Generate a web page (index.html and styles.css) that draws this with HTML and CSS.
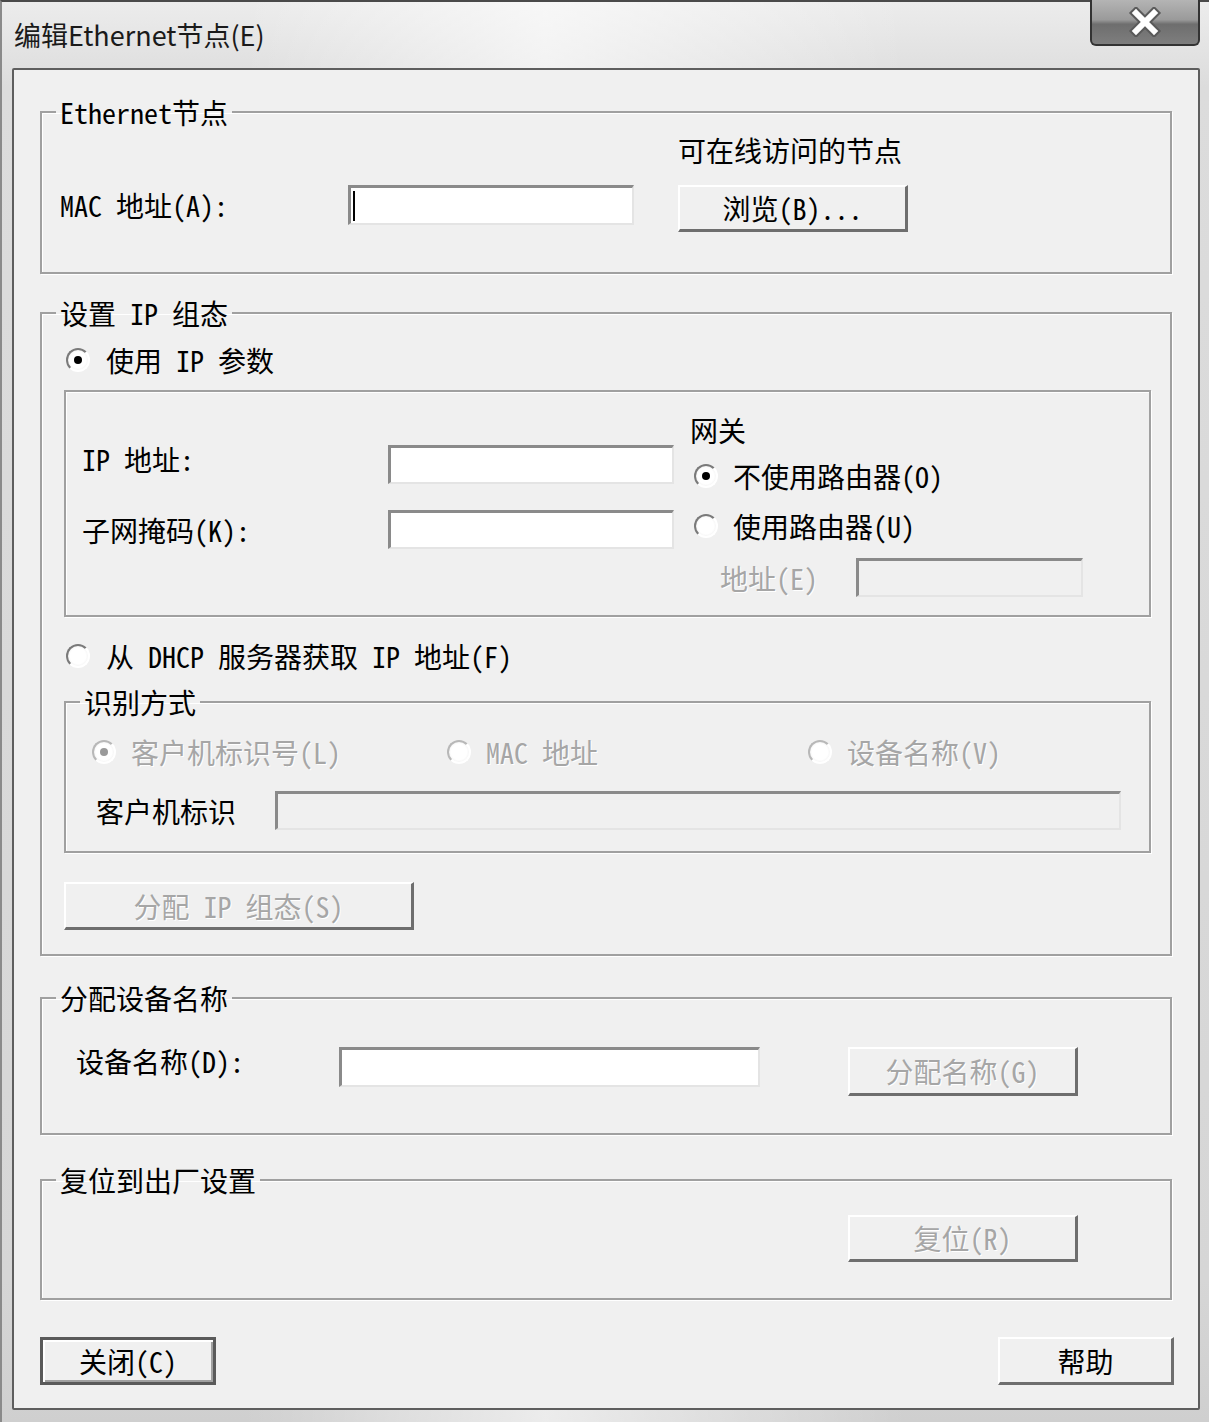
FILE: index.html
```html
<!DOCTYPE html>
<html>
<head>
    <meta charset="utf-8">
    <title>编辑Ethernet节点(E)</title>
    <link rel="stylesheet" href="styles.css">
</head>
<body>
<div class="window">
    <div class="titlebar">
        <span class="title">编辑Ethernet节点(E)</span>
        <div class="close-btn">
            <svg width="40" height="30" viewBox="0 0 40 30">
                <path d="M11 6 L29 24 M29 6 L11 24" stroke="#5a5a5a" stroke-width="10" stroke-linecap="square"/>
                <path d="M11 6 L29 24 M29 6 L11 24" stroke="#ffffff" stroke-width="6" stroke-linecap="square"/>
            </svg>
        </div>
    </div>

    <div class="client">
        <!-- Ethernet node -->
        <fieldset class="group">
            <legend>Ethernet节点</legend>
            <div class="eth-grid">
                <span></span>
                <span></span>
                <span class="caption">可在线访问的节点</span>
                <span class="mac-label">MAC 地址(A):</span>
                <div class="field mac-field"><span class="caret"></span></div>
                <button class="btn browse">浏览(B)...</button>
            </div>
        </fieldset>

        <!-- IP configuration -->
        <fieldset class="group ip-group">
            <legend>设置 IP 组态</legend>
            <div class="ip-body">
                <div class="option use-ip"><span class="radio on"></span>使用 IP 参数</div>

                <div class="ipbox">
                    <div class="ipleft">
                        <div class="row"><span class="row-label ip-label">IP 地址:</span><div class="field ip-field"></div></div>
                        <div class="row"><span class="row-label">子网掩码(K):</span><div class="field ip-field"></div></div>
                    </div>
                    <div class="ipright">
                        <span>网关</span>
                        <div class="option gw-first"><span class="radio on"></span>不使用路由器(O)</div>
                        <div class="option gw-second"><span class="radio"></span>使用路由器(U)</div>
                        <div class="row gw-addr"><span class="gw-label dis">地址(E)</span><div class="field off gw-field"></div></div>
                    </div>
                </div>

                <div class="option dhcp"><span class="radio"></span>从 DHCP 服务器获取 IP 地址(F)</div>

                <fieldset class="group id-group">
                    <legend>识别方式</legend>
                    <div class="id-body">
                        <div class="id-options">
                            <div class="option dis"><span class="radio on off"></span>客户机标识号(L)</div>
                            <div class="option dis"><span class="radio off"></span>MAC 地址</div>
                            <div class="option dis"><span class="radio off"></span>设备名称(V)</div>
                        </div>
                        <div class="row client-row"><span class="client-label">客户机标识</span><div class="field off client-field"></div></div>
                    </div>
                </fieldset>

                <button class="btn dis assign-ip">分配 IP 组态(S)</button>
            </div>
        </fieldset>

        <!-- Device name -->
        <fieldset class="group">
            <legend>分配设备名称</legend>
            <div class="name-body">
                <span class="name-label">设备名称(D):</span>
                <div class="field name-field"></div>
                <button class="btn dis assign-name">分配名称(G)</button>
            </div>
        </fieldset>

        <!-- Factory reset -->
        <fieldset class="group">
            <legend>复位到出厂设置</legend>
            <div class="reset-body">
                <button class="btn dis reset">复位(R)</button>
            </div>
        </fieldset>

        <div class="footer">
            <button class="btn default">关闭(C)</button>
            <button class="btn">帮助</button>
        </div>
    </div>
</div>
</body>
</html>
```

FILE: styles.css
```css
body {
    margin: 0;
    font-family: "Noto Sans Mono CJK SC", "Noto Sans CJK SC", monospace;
    font-size: 28px;
    line-height: 28px;
    color: #000;
}
.window {
    width: 1209px;
    height: 1422px;
    box-sizing: border-box;
    border-top: 2px solid #4a4a4a;
    border-left: 2px solid #8a8a8a;
    background:
        linear-gradient(90deg, rgba(255,255,255,0) 20%, rgba(255,255,255,0.6) 45%, rgba(255,255,255,0) 75%),
        linear-gradient(#ececec, #dcdcdc 6%, #d6d6d6 90%, #cfcfcf);
}
.titlebar {
    height: 66px;
    display: flex;
    justify-content: space-between;
    align-items: flex-start;
    padding: 0 9px 0 12px;
}
.title {
    margin-top: 17px;
    font-family: "Noto Sans CJK SC", sans-serif;
    font-size: 27px;
    line-height: 32px;
    color: #1a1a1a;
}
.close-btn {
    width: 110px;
    height: 46px;
    margin-top: -2px;
    box-sizing: border-box;
    border: 2px solid #333;
    border-top: none;
    border-radius: 0 0 6px 6px;
    background: linear-gradient(#b4b4b4, #9a9a9a 45%, #6e6e6e 55%, #7e7e7e);
    display: flex;
    align-items: center;
    justify-content: center;
}
.client {
    margin: 0 9px 0 10px;
    height: 1342px;
    box-sizing: border-box;
    border: 2px solid #5e5e5e;
    border-radius: 2px;
    background: #f0f0f0;
    padding: 0 26px;
    display: flex;
    flex-direction: column;
}

/* group boxes */
.group {
    margin: 0;
    padding: 0;
    min-width: 0;
    border: 2px solid #a0a0a0;
    box-shadow: 1px 1px 0 #fff, inset 1px 1px 0 #fff;
}
.group legend {
    margin-left: 14px;
    padding: 0 4px;
    line-height: 28px;
}
.client > .group:nth-child(1) { margin-top: 28px; }
.client > .group:nth-child(2) { margin-top: 25px; }
.client > .group:nth-child(3) { margin-top: 28px; }
.client > .group:nth-child(4) { margin-top: 31px; }

/* controls */
.field {
    box-sizing: border-box;
    background: #fff;
    border-style: solid;
    border-width: 3px 2px 2px 3px;
    border-color: #8a8a8a #e4e4e4 #e4e4e4 #8a8a8a;
}
.field.off {
    background: #f0f0f0;
}
.caret {
    display: block;
    width: 2px;
    height: 30px;
    margin: 3px 0 0 2px;
    background: #000;
}
.btn {
    box-sizing: border-box;
    padding: 0;
    font: inherit;
    color: #000;
    background: #f0f0f0;
    border-style: solid;
    border-width: 2px 3px 3px 2px;
    border-color: #fff #6e6e6e #6e6e6e #fff;
    white-space: nowrap;
}
.btn.default {
    border: 3px solid #5a5a5a;
    box-shadow: inset 2px 2px 0 #fff, inset -2px -2px 0 #a0a0a0;
}
.dis {
    color: #a6a6a6;
    text-shadow: 1px 1px 0 #fff;
}
.radio {
    position: relative;
    width: 24px;
    height: 24px;
    box-sizing: border-box;
    border-radius: 50%;
    border: 2px solid;
    border-color: #7a7a7a #fff #fff #7a7a7a;
    background: radial-gradient(circle, #fff 55%, #e6e6e6);
    flex: none;
}
.radio.on::after {
    content: "";
    position: absolute;
    left: 6px;
    top: 6px;
    width: 8px;
    height: 8px;
    border-radius: 50%;
    background: #000;
}
.radio.off {
    border-color: #b8b8b8 #fff #fff #b8b8b8;
}
.radio.on.off::after {
    background: #9a9a9a;
}
.option {
    display: flex;
    align-items: center;
    height: 28px;
    gap: 15px;
    white-space: nowrap;
}
.row {
    display: flex;
    align-items: center;
    white-space: nowrap;
}

/* Ethernet node */
.eth-grid {
    display: grid;
    grid-template-columns: 288px 286px 274px;
    row-gap: 21px;
    align-items: start;
    padding: 10px 0 40px 18px;
}
.caption {
    margin-left: 44px;
    white-space: nowrap;
}
.mac-label {
    margin-top: 6px;
    white-space: nowrap;
}
.mac-field {
    height: 40px;
}
.browse {
    margin-left: 44px;
    width: 230px;
    height: 47px;
}

/* IP configuration */
.ip-body {
    display: flex;
    flex-direction: column;
    padding: 19px 19px 24px 22px;
}
.use-ip,
.dhcp {
    margin-left: 2px;
    gap: 16px;
}
.ipbox {
    margin-top: 16px;
    display: flex;
    padding: 24px 0 18px 16px;
    border: 2px solid #a0a0a0;
    box-shadow: 1px 1px 0 #fff, inset 1px 1px 0 #fff;
}
.ipleft {
    display: flex;
    flex-direction: column;
    gap: 26px;
    padding-top: 29px;
}
.row-label {
    width: 306px;
}
.ip-label {
    margin-bottom: 11px;
}
.ip-field {
    width: 286px;
    height: 39px;
}
.ipright {
    margin-left: 16px;
    display: flex;
    flex-direction: column;
}
.ipright .option {
    margin-left: 4px;
}
.gw-first { margin-top: 18px; }
.gw-second { margin-top: 22px; }
.gw-addr {
    margin-top: 18px;
    padding-left: 30px;
}
.gw-label {
    width: 136px;
}
.gw-field {
    width: 227px;
    height: 39px;
}
.dhcp {
    margin-top: 25px;
}
.id-group {
    margin-top: 18px;
}
.id-body {
    padding: 22px 28px 21px 26px;
}
.id-options {
    display: grid;
    grid-template-columns: 355px 361px auto;
}
.client-row {
    margin-top: 25px;
}
.client-label {
    margin-left: 4px;
    width: 179px;
}
.client-field {
    flex: 1;
    height: 39px;
}
.assign-ip {
    margin-top: 29px;
    align-self: flex-start;
    width: 350px;
    height: 48px;
}

/* device name */
.name-body {
    display: flex;
    align-items: flex-start;
    padding: 35px 0 37px 34px;
}
.name-label {
    width: 263px;
    white-space: nowrap;
}
.name-field {
    width: 421px;
    height: 40px;
}
.assign-name {
    margin-left: 88px;
    width: 230px;
    height: 49px;
}

/* reset */
.reset-body {
    padding: 21px 0 36px 806px;
}
.reset {
    display: block;
    width: 230px;
    height: 47px;
}

/* bottom buttons */
.footer {
    margin: 37px -2px 0 0;
    display: flex;
    justify-content: space-between;
}
.footer .btn {
    width: 176px;
    height: 48px;
}
```
